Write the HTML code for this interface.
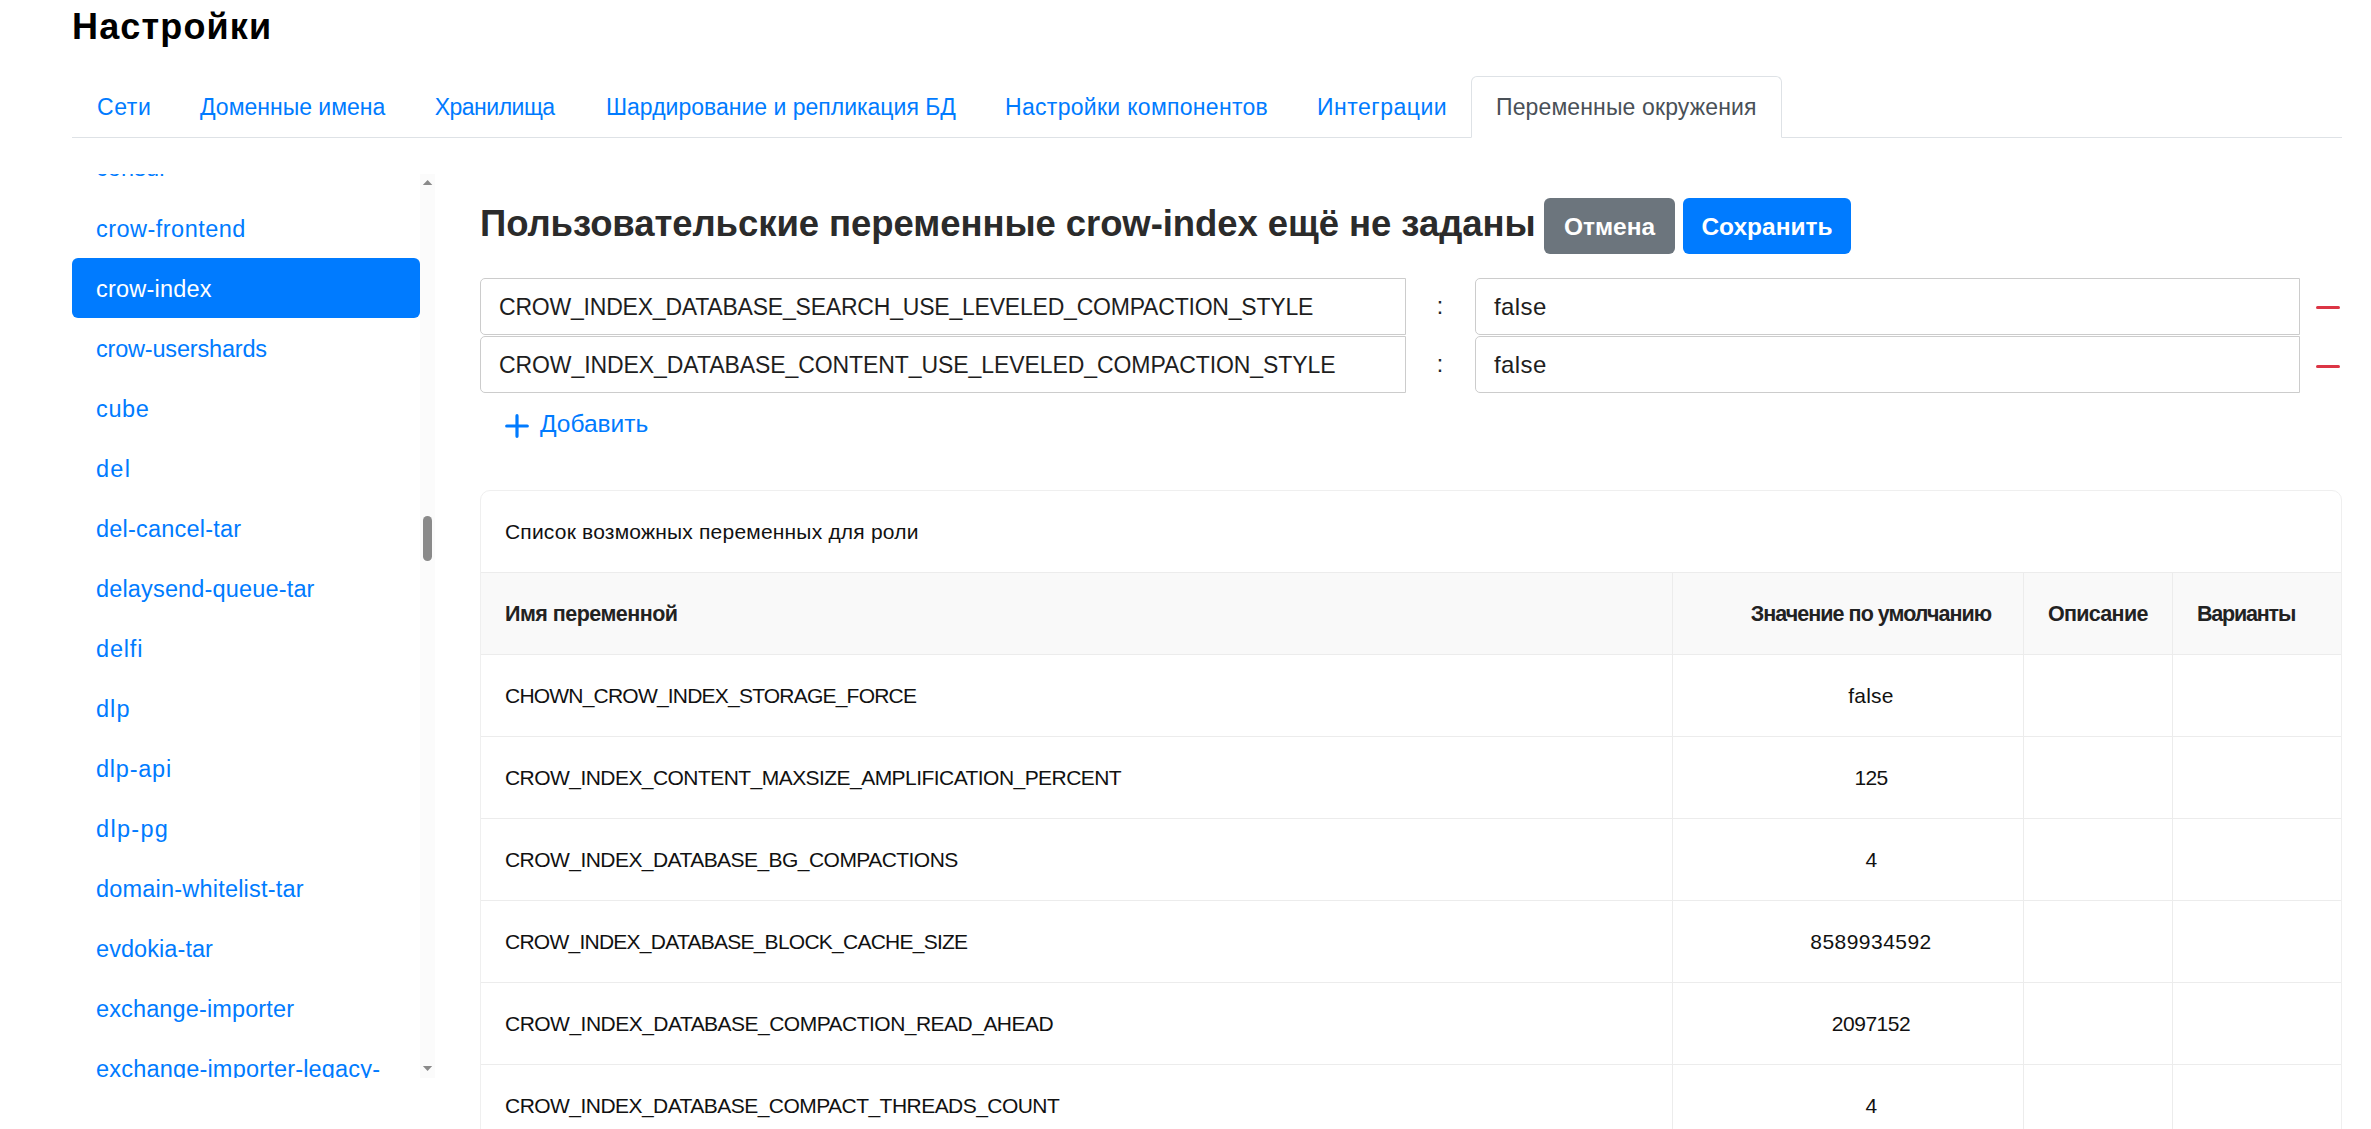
<!DOCTYPE html>
<html lang="ru">
<head>
<meta charset="utf-8">
<title>Настройки</title>
<style>
*{box-sizing:border-box;margin:0;padding:0}
html,body{width:2371px;height:1129px;overflow:hidden;background:#fff}
body{position:relative;font-family:"Liberation Sans",sans-serif;color:#212529}
.abs{position:absolute;white-space:nowrap}
#title{left:72px;top:1.5px;font-size:36px;font-weight:bold;line-height:50px;color:#000;letter-spacing:1.15px}
#tabs{position:absolute;left:72px;top:76px;width:2270px;height:62px;border-bottom:1px solid #dee2e6}
.tab{position:absolute;top:0;height:62px;line-height:60px;border:1px solid transparent;border-radius:6px 6px 0 0;font-size:23px;color:#007bff;padding-left:24px}
.tab.active{border-color:#dee2e6 #dee2e6 #fff;color:#495057;background:#fff}
#side{position:absolute;left:72px;top:174px;width:363px;height:904px;overflow:hidden}
.item{position:absolute;left:0;width:348px;height:60px;line-height:62px;padding-left:24px;font-size:23.5px;letter-spacing:0.45px;color:#007bff;white-space:nowrap}
.item.active{background:#007bff;color:#fff;border-radius:6px}
#track{position:absolute;left:348px;top:0;width:15px;height:904px;background:#fbfbfb}
#thumb{position:absolute;left:3px;top:342px;width:9px;height:45px;border-radius:4.5px;background:#8a8a8a}
.arr{position:absolute;left:3px;width:0;height:0;border-left:4.5px solid transparent;border-right:4.5px solid transparent}
#heading{left:480px;top:196px;font-size:36.5px;font-weight:bold;line-height:56px;color:#2b2b2b;letter-spacing:-0.07px}
.btn{position:absolute;top:198px;height:56px;line-height:58px;border-radius:6px;color:#fff;font-weight:bold;font-size:24.5px;text-align:center}
.inp{position:absolute;height:57px;border:1px solid #cccccc;line-height:57px;padding-left:18px;font-size:23px;letter-spacing:-0.15px;color:#1e1e1e;white-space:nowrap;overflow:hidden}
.key{left:480px;width:926px;border-radius:5px 0 0 5px}
.val{left:1475px;width:825px;border-radius:5px 0 0 5px;font-size:24px;line-height:55px;letter-spacing:0.4px}
.colon{position:absolute;left:1430px;width:20px;text-align:center;font-size:23px;line-height:56px;color:#212529}
.minus{position:absolute;left:2316px;width:24px;height:3px;border-radius:2px;background:#dc3545}
#add{position:absolute;left:505px;top:414px;width:24px;height:24px}
#addtxt{left:540px;top:394px;font-size:24.5px;line-height:60px;color:#007bff}
#card{position:absolute;left:480px;top:490px;width:1862px;height:700px;border:1px solid #efefef;border-radius:10px;overflow:hidden;background:#fff}
#cardtitle{left:24px;top:-0.5px;font-size:21px;letter-spacing:0.2px;line-height:82px;color:#111}
table{position:absolute;left:-1px;top:81px;border-collapse:collapse;table-layout:fixed;width:1862px}
th,td{border:1px solid #ececec;height:82px;padding:0 0 0 24px;text-align:left;white-space:nowrap;font-size:20.5px}
th{background:#f9f9f9;font-weight:bold;color:#222;font-size:21.5px;letter-spacing:-0.6px;line-height:80px}
td{color:#111;font-size:21px;letter-spacing:-0.7px;line-height:80px}
td.c,th.c{text-align:center;padding:0 24px 0 70px}
</style>
</head>
<body>
<div id="title" class="abs">Настройки</div>

<div id="tabs">
  <div class="tab" style="left:0px;letter-spacing:0.6px">Сети</div>
  <div class="tab" style="left:103px">Доменные имена</div>
  <div class="tab" style="left:337.7px;letter-spacing:-0.5px">Хранилища</div>
  <div class="tab" style="left:509px">Шардирование и репликация БД</div>
  <div class="tab" style="left:908px;letter-spacing:0.3px">Настройки компонентов</div>
  <div class="tab" style="left:1220px;letter-spacing:0.5px">Интеграции</div>
  <div class="tab active" style="left:1399px;width:311px;letter-spacing:0.13px">Переменные окружения</div>
</div>

<div id="side">
  <div class="item" style="top:-37px;letter-spacing:0.1px">consul</div>
  <div class="item" style="top:24px;letter-spacing:0.47px">crow-frontend</div>
  <div class="item active" style="top:84px;letter-spacing:0.22px">crow-index</div>
  <div class="item" style="top:144px;letter-spacing:-0.19px">crow-usershards</div>
  <div class="item" style="top:204px;letter-spacing:0.65px">cube</div>
  <div class="item" style="top:264px;letter-spacing:1.25px">del</div>
  <div class="item" style="top:324px;letter-spacing:0.21px">del-cancel-tar</div>
  <div class="item" style="top:384px;letter-spacing:0.16px">delaysend-queue-tar</div>
  <div class="item" style="top:444px;letter-spacing:0.83px">delfi</div>
  <div class="item" style="top:504px;letter-spacing:1.05px">dlp</div>
  <div class="item" style="top:564px;letter-spacing:0.77px">dlp-api</div>
  <div class="item" style="top:624px;letter-spacing:1.31px">dlp-pg</div>
  <div class="item" style="top:684px;letter-spacing:0.2px">domain-whitelist-tar</div>
  <div class="item" style="top:744px;letter-spacing:0.07px">evdokia-tar</div>
  <div class="item" style="top:804px;letter-spacing:0.13px">exchange-importer</div>
  <div class="item" style="top:864px;letter-spacing:0.19px">exchange-importer-legacy-</div>
  <div id="track">
    <svg style="position:absolute;left:0;top:0" width="15" height="904"><polygon points="2.8,11 12.3,11 7.6,5.9" fill="#8a8a8a"/><polygon points="2.9,891.9 12.2,891.9 7.55,896.9" fill="#8a8a8a"/></svg>
    <div id="thumb"></div>
  </div>
</div>

<div id="heading" class="abs">Пользовательские переменные crow-index ещё не заданы</div>
<div class="btn" style="left:1544px;width:131px;background:#6c757d">Отмена</div>
<div class="btn" style="left:1683px;width:168px;background:#007bff">Сохранить</div>

<div class="inp key" style="top:278px;letter-spacing:-0.21px">CROW_INDEX_DATABASE_SEARCH_USE_LEVELED_COMPACTION_STYLE</div>
<div class="colon" style="top:278px">:</div>
<div class="inp val" style="top:278px">false</div>
<div class="minus" style="top:306px"></div>

<div class="inp key" style="top:336px;letter-spacing:-0.08px">CROW_INDEX_DATABASE_CONTENT_USE_LEVELED_COMPACTION_STYLE</div>
<div class="colon" style="top:336px">:</div>
<div class="inp val" style="top:336px">false</div>
<div class="minus" style="top:365px"></div>

<svg id="add" viewBox="0 0 24 24"><path d="M12 1.7V22.3M1.7 12H22.3" stroke="#007bff" stroke-width="3.2" stroke-linecap="round" fill="none"/></svg>
<div id="addtxt" class="abs">Добавить</div>

<div id="card">
  <div id="cardtitle" class="abs">Список возможных переменных для роли</div>
  <table>
    <colgroup><col style="width:1192px"><col style="width:351px"><col style="width:149px"><col style="width:170px"></colgroup>
    <tr><th style="letter-spacing:-0.52px">Имя переменной</th><th class="c" style="letter-spacing:-0.96px">Значение по умолчанию</th><th style="letter-spacing:-0.7px">Описание</th><th style="letter-spacing:-1.2px">Варианты</th></tr>
    <tr><td style="letter-spacing:-0.79px">CHOWN_CROW_INDEX_STORAGE_FORCE</td><td class="c" style="letter-spacing:0.22px">false</td><td></td><td></td></tr>
    <tr><td style="letter-spacing:-0.55px">CROW_INDEX_CONTENT_MAXSIZE_AMPLIFICATION_PERCENT</td><td class="c">125</td><td></td><td></td></tr>
    <tr><td style="letter-spacing:-0.55px">CROW_INDEX_DATABASE_BG_COMPACTIONS</td><td class="c">4</td><td></td><td></td></tr>
    <tr><td style="letter-spacing:-0.75px">CROW_INDEX_DATABASE_BLOCK_CACHE_SIZE</td><td class="c" style="letter-spacing:0.46px">8589934592</td><td></td><td></td></tr>
    <tr><td style="letter-spacing:-0.52px">CROW_INDEX_DATABASE_COMPACTION_READ_AHEAD</td><td class="c" style="letter-spacing:-0.5px">2097152</td><td></td><td></td></tr>
    <tr><td style="letter-spacing:-0.54px">CROW_INDEX_DATABASE_COMPACT_THREADS_COUNT</td><td class="c">4</td><td></td><td></td></tr>
  </table>
</div>
</body>
</html>
